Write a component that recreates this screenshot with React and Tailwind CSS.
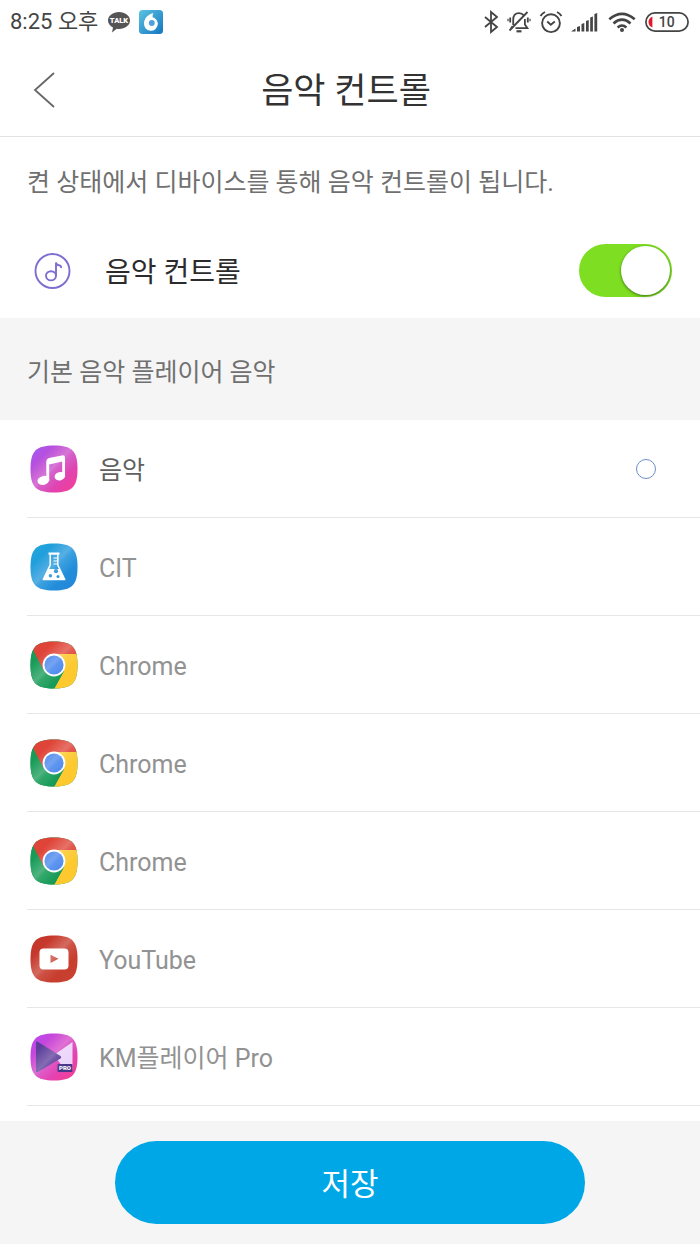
import React, { useState } from 'react';

const SQUIRCLE = 'M24 0.5 C42 0.5 47.5 6 47.5 24 C47.5 42 42 47.5 24 47.5 C6 47.5 0.5 42 0.5 24 C0.5 6 6 0.5 24 0.5 Z';

// Rounded app tile with a diagonal shine, the artwork is passed as children
const AppIcon = ({ id, from, to, children }) => (
    <svg viewBox="0 0 48 48" className="size-12 shrink-0" aria-hidden="true">
        <defs>
            <clipPath id={`${id}-clip`}>
                <path d={SQUIRCLE} />
            </clipPath>
            <linearGradient id={`${id}-bg`} x1="0" y1="0" x2="1" y2="1">
                <stop offset="0.1" stopColor={from} />
                <stop offset="0.85" stopColor={to} />
            </linearGradient>
            <linearGradient id={`${id}-shine`} x1="0" y1="0" x2="1" y2="1">
                <stop offset="0.25" stopColor="#fff" stopOpacity="0" />
                <stop offset="0.47" stopColor="#fff" stopOpacity="0.24" />
                <stop offset="0.53" stopColor="#fff" stopOpacity="0.12" />
                <stop offset="0.7" stopColor="#fff" stopOpacity="0" />
            </linearGradient>
        </defs>
        <g clipPath={`url(#${id}-clip)`}>
            <rect width="48" height="48" fill={`url(#${id}-bg)`} />
            {children}
            <rect width="48" height="48" fill={`url(#${id}-shine)`} />
        </g>
    </svg>
);

const MusicIcon = ({ id }) => (
    <AppIcon id={id} from="#a855ee" to="#ee3fa0">
        <g fill="#fff">
            <path d="M16.3 16.2 Q16.4 13.8 19 13.1 L32 10.4 Q35 10 35 12.6 V31 H32.2 V16.6 L19.2 19.6 V36 H16.3 Z" />
            <ellipse cx="13.4" cy="35.4" rx="6" ry="4.4" transform="rotate(-15 13.4 35.4)" />
            <ellipse cx="29.9" cy="31.2" rx="5.4" ry="4.2" transform="rotate(-15 29.9 31.2)" />
        </g>
    </AppIcon>
);

const FlaskIcon = ({ id }) => (
    <AppIcon id={id} from="#20a5dc" to="#2488da">
        <path d="M20.2 11.5 V22 L13.5 36 H34.5 L27.8 22 V11.5" fill="none" stroke="#fff" strokeWidth="1.5" />
        <path d="M18.5 10.7 H29.5" stroke="#fff" strokeWidth="2.2" />
        <path d="M18.1 26 H29.9 L35.2 37.3 H12.8 Z" fill="#fff" />
        <path d="M23.5 15 H27 M23.5 18 H27 M23.5 21 H27" stroke="#fff" strokeWidth="1.1" />
        <circle cx="26" cy="28.2" r="2.1" fill="#2794d8" />
        <circle cx="20.4" cy="32.7" r="1.7" fill="#2794d8" />
        <circle cx="28" cy="33.6" r="1.5" fill="#2794d8" />
    </AppIcon>
);

const ChromeIcon = ({ id }) => (
    <AppIcon id={id} from="#179b57" to="#179b57">
        <path d="M24 13 H48 V48 H24 L34 30 Z" fill="#fdc92f" />
        <path d="M0 0 H48 V13 H24 L14 30 L4 11 Z" fill="#df4438" />
        <path d="M34 30 L24 48 H0 V5 L14 30 Z" fill="#179b57" />
        <circle cx="24" cy="24" r="11.4" fill="#fff" />
        <circle cx="24" cy="24" r="9.6" fill="#4987ed" />
    </AppIcon>
);

const YoutubeIcon = ({ id }) => (
    <AppIcon id={id} from="#c5362a" to="#c8402f">
        <rect x="9.5" y="13.5" width="29" height="21" rx="4" fill="#fff" />
        <path d="M20.5 19.7 L28.5 23.8 L20.5 28 Z" fill="#c8473b" />
    </AppIcon>
);

const KmPlayerIcon = ({ id }) => (
    <AppIcon id={id} from="#bb48ec" to="#f0409f">
        <path d="M24 22 L42.5 9 V37 H35 Z" fill="#ebd5fb" />
        <path d="M6 9.5 Q6 7.8 7.8 8.7 L30.5 23 Q32 24.3 30.5 25.6 L7.8 39 Q6 39.8 6 38 Z" fill="#5e3e9b" />
        <rect x="27.5" y="31" width="15" height="8" rx="1" fill="#49358a" />
        <text x="35" y="37.2" fill="#fff" fontSize="6" fontWeight="900" textAnchor="middle" fontFamily="Roboto, sans-serif">PRO</text>
    </AppIcon>
);

const players = [
    { name: '음악', Icon: MusicIcon },
    { name: 'CIT', Icon: FlaskIcon },
    { name: 'Chrome', Icon: ChromeIcon },
    { name: 'Chrome', Icon: ChromeIcon },
    { name: 'Chrome', Icon: ChromeIcon },
    { name: 'YouTube', Icon: YoutubeIcon },
    { name: 'KM플레이어 Pro', Icon: KmPlayerIcon },
];

const StatusBar = () => (
    <div className="flex h-11 items-center justify-between px-2.5 text-[#444]">
        <div className="flex items-center">
            <span className="text-[22px] leading-7">8:25 오후</span>
            <svg viewBox="0 0 24 22" className="ml-[9px] h-[22px] w-6" aria-hidden="true">
                <path d="M12 1 C18 1 23 4.6 23 9.5 C23 14.4 18 18 12 18 Q10.8 18 9.8 17.8 L5 21.4 L6 16.5 C3 15 1 12.5 1 9.5 C1 4.6 6 1 12 1 Z" fill="#555" />
                <text x="12" y="12.2" fill="#fff" fontSize="7.5" fontWeight="900" textAnchor="middle" fontFamily="Roboto, sans-serif">TALK</text>
            </svg>
            <svg viewBox="0 0 24 24" className="ml-2 size-6" aria-hidden="true">
                <defs>
                    <linearGradient id="dial-bg" x1="0" y1="0" x2="1" y2="1">
                        <stop offset="0" stopColor="#5cc3e2" />
                        <stop offset="1" stopColor="#1477c0" />
                    </linearGradient>
                </defs>
                <rect width="24" height="24" rx="3.5" fill="url(#dial-bg)" />
                <path d="M14.3 3 C8 4.8 5 9.3 5 13.6 A6.9 6.9 0 1 0 13.6 7.2 Q13.2 5.4 14.3 3 Z" fill="#fff" />
                <circle cx="12.8" cy="13" r="2.9" fill="#4e9fe0" />
            </svg>
        </div>
        <div className="flex items-center">
            <svg viewBox="0 0 16 24" className="h-6 w-4" fill="none" stroke="currentColor" strokeWidth="1.8" aria-hidden="true">
                <path d="M2 7 L14 17 L8 22 V2 L14 7 L2 17" />
            </svg>
            <svg viewBox="0 0 24 24" className="ml-2 size-6" fill="none" stroke="currentColor" strokeWidth="1.8" aria-hidden="true">
                <path d="M6.2 15 V10 Q6.2 3.2 12 3.2 Q15 3.2 16.8 5.4 M17.9 9 V14.5 L20.4 18.2 H8.5 M5.6 16.4 L4 18.6" />
                <path d="M2.5 20.5 L20.5 2" />
                <path d="M9.5 21.3 H14.5" strokeWidth="2.2" />
                <path d="M3.2 7.5 V12.5 M20.8 7.5 V12.5" />
                <path d="M1 8.7 V11.3 M23 8.7 V11.3" strokeWidth="1.2" />
            </svg>
            <svg viewBox="0 0 24 24" className="ml-2 size-6" fill="none" stroke="currentColor" strokeWidth="1.9" aria-hidden="true">
                <circle cx="12" cy="13.2" r="8.9" />
                <path d="M8.2 11.5 L11.8 14.7 L15.8 11.5 M1.5 6 Q3.3 3.2 6 2 M22.5 6 Q20.7 3.2 18 2" />
            </svg>
            <svg viewBox="0 0 27 20" className="ml-2 h-5 w-[27px]" fill="currentColor" aria-hidden="true">
                <path d="M0 19.5 L4.5 16.5 V19.5 Z M6 15 L9 14 V19.5 H6 Z M10.5 12 L13.3 11 V19.5 H10.5 Z M15 9 L17.7 8 V19.5 H15 Z M19.2 5.5 L21.9 4.5 V19.5 H19.2 Z M23.4 2 L26.2 1 V19.5 H23.4 Z" />
            </svg>
            <svg viewBox="0 0 28 20" className="ml-2.5 h-5 w-7" fill="none" stroke="currentColor" strokeWidth="2.6" aria-hidden="true">
                <path d="M1.3 7.3 Q14 -3.6 26.7 7.3 M5.5 11.4 Q14 4 22.5 11.4 M9.6 15.4 Q14 11.6 18.4 15.4" />
                <circle cx="14" cy="18" r="2" fill="currentColor" stroke="none" />
            </svg>
            <svg viewBox="0 0 46 20" className="ml-2 h-5 w-[46px]" aria-hidden="true">
                <rect x="1.9" y="0.9" width="42.2" height="18.2" rx="9.1" fill="#fff" stroke="#444" strokeWidth="1.7" />
                <path d="M8.4 4.5 V15.5 Q4.5 14 4.5 10 Q4.5 6 8.4 4.5 Z" fill="#e3172b" />
                <text x="22.8" y="15" fill="#444" fontSize="14" fontWeight="500" textAnchor="middle" fontFamily="Roboto, sans-serif">10</text>
            </svg>
        </div>
    </div>
);

const App = () => {
    const [enabled, setEnabled] = useState(true);
    const [selected, setSelected] = useState(0);

    return (
        <div className="flex min-h-screen flex-col bg-white font-[Roboto,'Noto_Sans_CJK_KR',sans-serif]">
            <StatusBar />

            <header className="grid h-[93px] grid-cols-[80px_1fr_88px] items-center border-b border-[#e2e2e2]">
                <button type="button" aria-label="뒤로" className="flex h-full items-center pl-8">
                    <svg viewBox="0 0 24 36" className="h-9 w-6" fill="none" stroke="#666" strokeWidth="1.8" aria-hidden="true">
                        <path d="M22 1 L3 18 L22 35" />
                    </svg>
                </button>
                <h1 className="pt-1 text-center text-[35px] leading-10 text-[#333]">음악 컨트롤</h1>
            </header>

            <main className="flex-1">
                <p className="px-[27px] pt-7 text-[25px] leading-9 text-[#707070]">
                    켠 상태에서 디바이스를 통해 음악 컨트롤이 됩니다.
                </p>

                <div className="flex h-[117px] items-center pt-[22px] pr-7 pl-[34px]">
                    <svg viewBox="0 0 38 38" className="size-[38px]" fill="none" stroke="#7d6fd0" strokeWidth="1.9" aria-hidden="true">
                        <circle cx="18.5" cy="19" r="17" />
                        <ellipse cx="17" cy="23.8" rx="5" ry="4.6" />
                        <path d="M22 24 V10.5 Q22.5 13 25 13.2 Q27.5 13.5 27 16" />
                    </svg>
                    <label htmlFor="music-control" className="ml-[33px] flex-1 pt-1 text-[28px] leading-9 text-[#2b2b2b]">
                        음악 컨트롤
                    </label>
                    <input
                        id="music-control"
                        type="checkbox"
                        role="switch"
                        checked={enabled}
                        onChange={(e) => setEnabled(e.target.checked)}
                        className="flex h-[53px] w-[93px] appearance-none items-center rounded-full bg-gray-300 p-0.5 before:size-[49px] before:rounded-full before:bg-white before:shadow-[0_1px_3px_rgba(0,0,0,0.5)] checked:justify-end checked:bg-[#7edf22]"
                    />
                </div>

                <h2 className="bg-[#f5f5f5] px-[27px] pt-[37px] pb-[29px] text-[25px] leading-9 text-[#707070]">
                    기본 음악 플레이어 음악
                </h2>

                <ul>
                    {players.map(({ name, Icon }, index) => (
                        <li key={index} className="ml-[27px] h-[98px] border-b border-[#e6e6e6]">
                            <label className={`flex h-full items-center pr-11 pl-[3px] ${index === selected ? 'text-[#606060]' : 'text-[#929292]'}`}>
                                <Icon id={`player-${index}`} />
                                <span className="ml-[21px] flex-1 pt-1 text-[25px] leading-9">{name}</span>
                                <input
                                    type="radio"
                                    name="player"
                                    checked={index === selected}
                                    onChange={() => setSelected(index)}
                                    className="size-5 appearance-none rounded-full border-transparent checked:border checked:border-[#6d8fc4]"
                                />
                            </label>
                        </li>
                    ))}
                </ul>
            </main>

            <footer className="flex justify-center bg-[#f5f5f5] py-5">
                <button type="button" className="h-[83px] w-[67.2%] rounded-full bg-[#00a7e7] pt-1 text-[31px] leading-10 text-white">
                    저장
                </button>
            </footer>
        </div>
    );
};

export default App;
